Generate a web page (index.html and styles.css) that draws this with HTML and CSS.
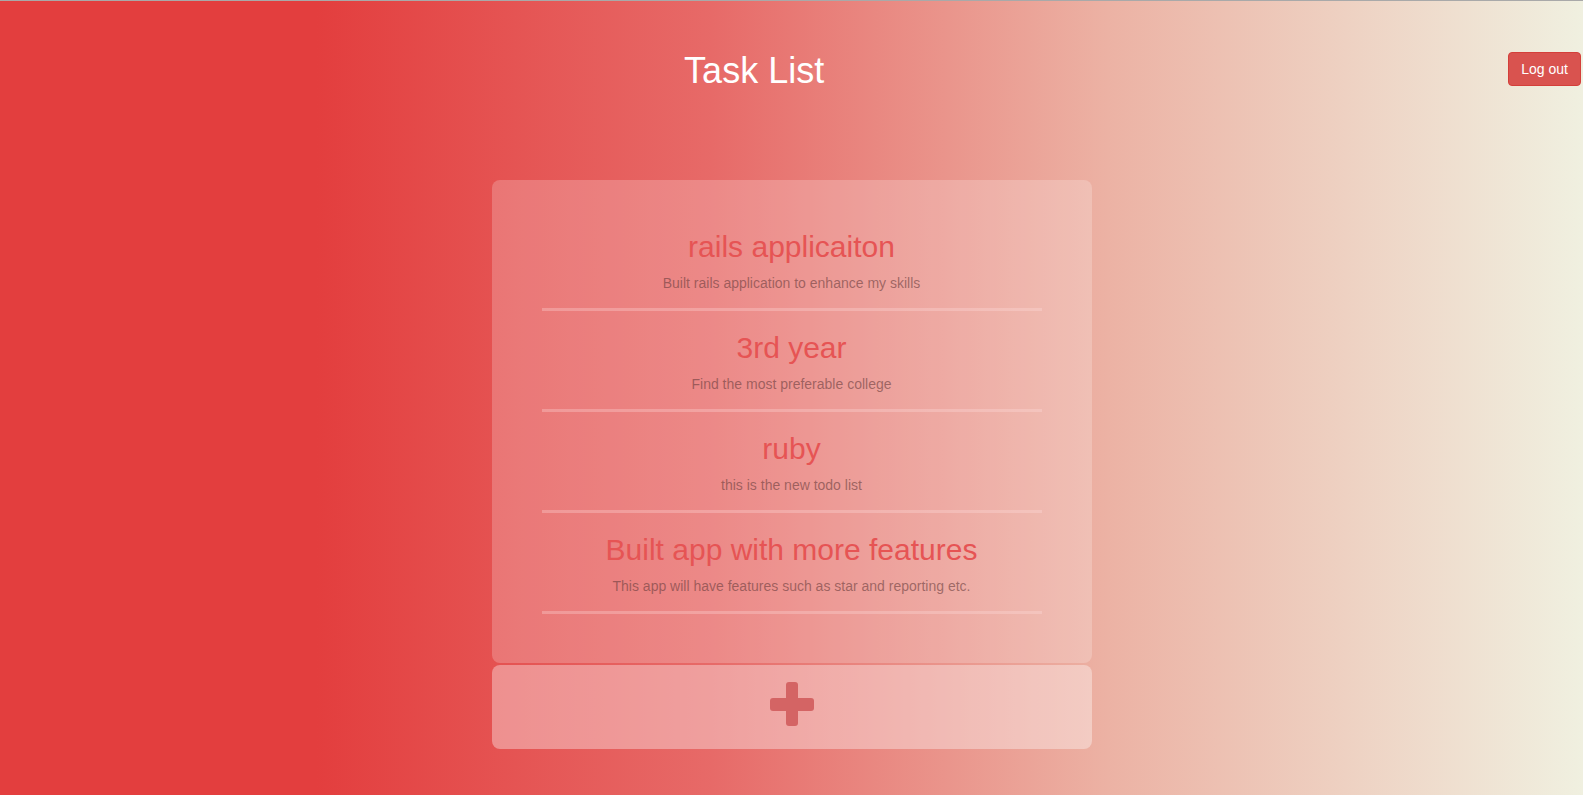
FILE: index.html
```html
<!DOCTYPE html>
<html lang="en">
<head>
<meta charset="utf-8">
<title>Task List</title>
<link rel="stylesheet" href="styles.css">
</head>
<body>
<header class="header">
  <h1 class="page-title">Task List</h1>
  <button class="btn-logout" type="button">Log out</button>
</header>
<main class="wrap">
  <section class="card">
    <div class="task">
      <h2 class="task-title">rails applicaiton</h2>
      <p class="task-desc">Built rails application to enhance my skills</p>
    </div>
    <div class="task">
      <h2 class="task-title">3rd year</h2>
      <p class="task-desc">Find the most preferable college</p>
    </div>
    <div class="task">
      <h2 class="task-title">ruby</h2>
      <p class="task-desc">this is the new todo list</p>
    </div>
    <div class="task">
      <h2 class="task-title">Built app with more features</h2>
      <p class="task-desc">This app will have features such as star and reporting etc.</p>
    </div>
  </section>
  <a class="add-box" href="#">
    <svg class="plus" width="44" height="44" viewBox="0 0 44 44" aria-hidden="true">
      <rect x="16" y="0" width="12" height="44" rx="3" fill="#d46464"/>
      <rect x="0" y="16" width="44" height="13" rx="3" fill="#d46464"/>
    </svg>
  </a>
</main>
</body>
</html>
```
FILE: styles.css
```css
html {
  height: 100%;
  background: linear-gradient(to right, #e33e3e 0%, #e33e3e 20%, #e76a68 45%, #ecb2a4 70%, #f0f0e0 100%);
}
body {
  margin: 0;
  min-height: 100%;
  border-top: 1px solid #a9a9a9;
  font-family: "Liberation Sans", Arial, Helvetica, sans-serif;
  box-sizing: border-box;
}
.header {
  display: flex;
  align-items: flex-start;
  padding: 50px 2px 0 0;
}
.page-title {
  flex: 1;
  margin: 0;
  text-align: center;
  font-size: 36px;
  line-height: 40px;
  font-weight: normal;
  color: #ffffff;
}
.btn-logout {
  margin-top: 1px;
  height: 34px;
  padding: 6px 12px;
  font-family: "Liberation Sans", Arial, sans-serif;
  font-size: 14px;
  line-height: 20px;
  color: #ffffff;
  background: #d9534f;
  border: 1px solid #d43f3a;
  border-radius: 4px;
}
.wrap {
  width: 600px;
  margin: 89px auto 0;
  display: flex;
  flex-direction: column;
  gap: 2px;
}
.card {
  box-sizing: border-box;
  padding: 30px 50px 49px;
  background: rgba(255, 255, 255, 0.21);
  border-radius: 8px;
}
.task {
  padding: 20px 0 15px;
  border-bottom: 3px solid rgba(255, 225, 225, 0.3);
  text-align: center;
}
.task-title {
  margin: 0 0 10px;
  font-size: 30px;
  line-height: 33px;
  font-weight: normal;
  color: #e65454;
}
.task-desc {
  margin: 0;
  font-size: 14px;
  line-height: 20px;
  color: rgba(105, 60, 60, 0.6);
}
.add-box {
  display: flex;
  justify-content: center;
  height: 84px;
  box-sizing: border-box;
  padding-top: 17px;
  background: rgba(255, 255, 255, 0.36);
  border-radius: 8px;
}
.plus {
  display: block;
}
```
